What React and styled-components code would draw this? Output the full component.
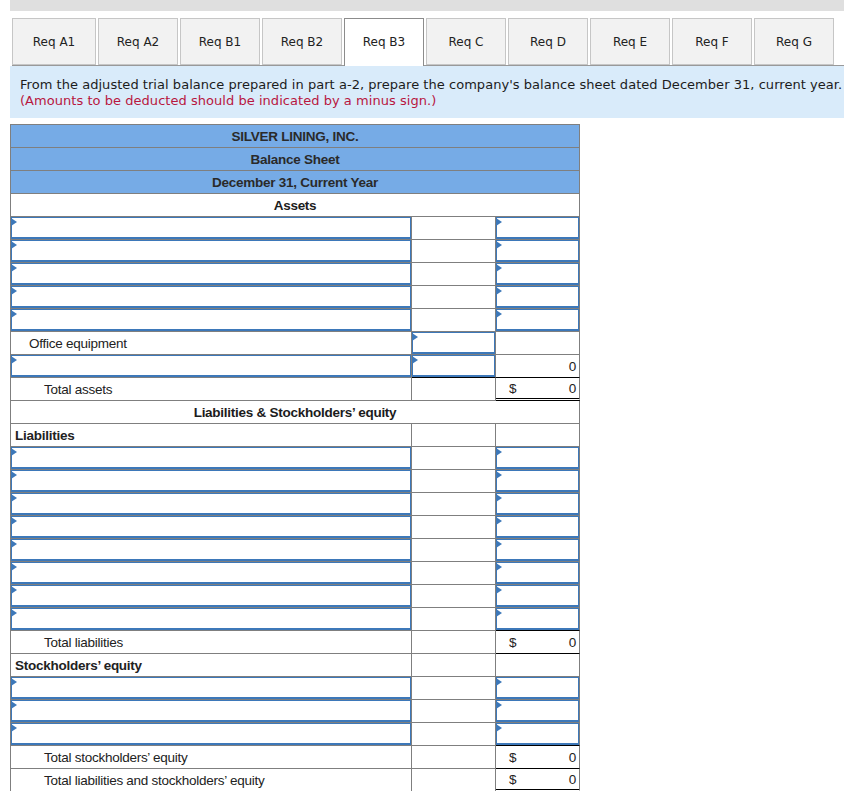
import React from 'react';
import styled, { createGlobalStyle } from 'styled-components';

const GlobalStyle = createGlobalStyle`
  html, body {
    margin: 0;
    padding: 0;
    background: #fff;
    overflow: hidden;
  }
`;

const Page = styled.div`
  width: 844px;
  height: 791px;
  overflow: hidden;
  padding-left: 10px;
  box-sizing: border-box;
`;

const TopBar = styled.div`
  height: 11px;
  background: #dfdfdf;
`;

const TabBar = styled.div`
  display: flex;
  gap: 2px;
  margin: 7px 0 0 2px;
  height: 47px;
  border-bottom: 1px solid #999;
`;

const Tab = styled.div`
  width: ${(p) => (p.$wide ? 84 : 80)}px;
  height: ${(p) => (p.$active ? 48 : 47)}px;
  padding-bottom: ${(p) => (p.$active ? 1 : 0)}px;
  box-sizing: border-box;
  display: flex;
  align-items: center;
  justify-content: center;
  font: 12px "DejaVu Sans", Verdana, sans-serif;
  color: #222;
  background: ${(p) => (p.$active ? '#fff' : '#f2f2f2')};
  border: 1px solid ${(p) => (p.$active ? '#8c8c8c' : '#c6c6c6')};
  border-bottom: ${(p) => (p.$active ? 'none' : '1px solid #c6c6c6')};
`;

const Instructions = styled.div`
  height: 52px;
  box-sizing: border-box;
  padding: 11px 0 0 10px;
  background: #d9ebfa;
  font: 13px/16px "DejaVu Sans", Verdana, sans-serif;
  letter-spacing: 0.04px;
  color: #1c1c1c;
  white-space: nowrap;
`;

const Note = styled.div`
  color: #b8173f;
`;

const Sheet = styled.table`
  margin-top: 6px;
  width: 570px;
  table-layout: fixed;
  border-collapse: separate;
  border-spacing: 0;
  border-top: 1px solid #7f7f7f;
  border-left: 1px solid #7f7f7f;
  font: 13.5px "Liberation Sans", Arial, sans-serif;
  letter-spacing: -0.26px;
  color: #222;
`;

const Cell = styled.td`
  height: 23px;
  box-sizing: border-box;
  padding: 0;
  border-right: 1px solid #7f7f7f;
  border-bottom: 1px solid ${(p) => (p.$ruled ? '#000' : '#7f7f7f')};
  white-space: nowrap;
  vertical-align: middle;
`;

const TitleCell = styled(Cell)`
  text-align: center;
  font-weight: bold;
  background: ${(p) => (p.$band ? '#76abe6' : '#fff')};
  color: ${(p) => (p.$band ? '#2a2a2a' : '#1c1c1c')};
`;

const LabelCell = styled(Cell)`
  padding-left: ${(p) => p.$indent}px;
`;

const HeadingCell = styled(Cell)`
  padding-left: 4px;
  font-weight: bold;
`;

const AmountCell = styled(Cell)`
  padding: 0 3px 0 13px;
  ${(p) => p.$double && 'border-bottom: 3px double #000;'}
`;

const Amount = styled.div`
  display: flex;
  justify-content: ${(p) => (p.$plain ? 'flex-end' : 'space-between')};
`;

const Field = styled.div`
  position: relative;
  height: 22px;
  box-sizing: border-box;
  border: 1px solid #3d78b9;
  border-bottom-width: 2px;

  &::before {
    content: '';
    position: absolute;
    left: -1px;
    top: 0;
    border-left: 6px solid #3d78b9;
    border-top: 4px solid transparent;
    border-bottom: 4px solid transparent;
  }
`;

const InputRow = ({ closing }) => (
  <tr>
    <Cell>
      <Field />
    </Cell>
    <Cell />
    <Cell $ruled={closing}>
      <Field />
    </Cell>
  </tr>
);

const TotalRow = ({ label, ...amount }) => (
  <tr>
    <LabelCell $indent={33}>{label}</LabelCell>
    <Cell />
    <AmountCell {...amount}>
      <Amount>
        <span>$</span>
        <span>0</span>
      </Amount>
    </AmountCell>
  </tr>
);

const HeadingRow = ({ label }) => (
  <tr>
    <HeadingCell>{label}</HeadingCell>
    <Cell />
    <Cell />
  </tr>
);

const Inputs = ({ count }) =>
  Array.from({ length: count }, (_, i) => <InputRow key={i} closing={i === count - 1} />);

const tabs = ['Req A1', 'Req A2', 'Req B1', 'Req B2', 'Req B3', 'Req C', 'Req D', 'Req E', 'Req F', 'Req G'];

export default function App() {
  return (
    <Page>
      <GlobalStyle />
      <TopBar />
      <TabBar>
        {tabs.map((t, i) => (
          <Tab key={t} $wide={i === 0} $active={t === 'Req B3'}>
            {t}
          </Tab>
        ))}
      </TabBar>
      <Instructions>
        From the adjusted trial balance prepared in part a-2, prepare the company's balance sheet dated December 31, current year.
        <Note>(Amounts to be deducted should be indicated by a minus sign.)</Note>
      </Instructions>
      <Sheet>
        <colgroup>
          <col width="401" />
          <col width="84" />
          <col width="84" />
        </colgroup>
        <tbody>
          <tr><TitleCell colSpan={3} $band>SILVER LINING, INC.</TitleCell></tr>
          <tr><TitleCell colSpan={3} $band>Balance Sheet</TitleCell></tr>
          <tr><TitleCell colSpan={3} $band>December 31, Current Year</TitleCell></tr>
          <tr><TitleCell colSpan={3}>Assets</TitleCell></tr>
          <InputRow />
          <InputRow />
          <InputRow />
          <InputRow />
          <InputRow />
          <tr>
            <LabelCell $indent={18}>Office equipment</LabelCell>
            <Cell><Field /></Cell>
            <Cell />
          </tr>
          <tr>
            <Cell><Field /></Cell>
            <Cell $ruled><Field /></Cell>
            <AmountCell $ruled>
              <Amount $plain><span>0</span></Amount>
            </AmountCell>
          </tr>
          <TotalRow label="Total assets" $double />
          <tr><TitleCell colSpan={3}>Liabilities &amp; Stockholders’ equity</TitleCell></tr>
          <HeadingRow label="Liabilities" />
          <Inputs count={8} />
          <TotalRow label="Total liabilities" $ruled />
          <HeadingRow label="Stockholders’ equity" />
          <Inputs count={3} />
          <TotalRow label="Total stockholders’ equity" $ruled />
          <TotalRow label="Total liabilities and stockholders’ equity" $double />
        </tbody>
      </Sheet>
    </Page>
  );
}
